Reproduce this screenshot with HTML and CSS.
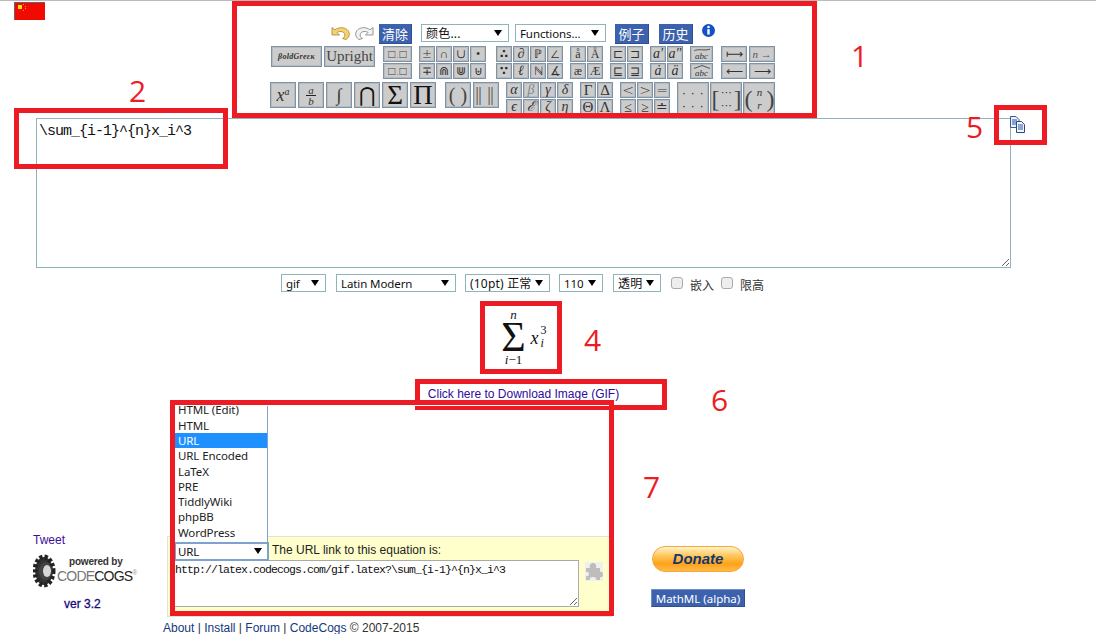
FILE: index.html
```html
<!DOCTYPE html>
<html lang="zh">
<head>
<meta charset="utf-8">
<title>LaTeX Equation Editor</title>
<link rel="stylesheet" href="styles.css">
</head>
<body>
<div class="page">
  <header class="top">
    <svg class="flag" width="31" height="18" viewBox="0 0 31 18"><rect width="31" height="18" fill="#f00a00"/><path d="M0 .5H31M.5 0V18" stroke="#666"/><rect x="4" y="3" width="4" height="4" fill="#ffe600"/><rect x="9" y="2" width="1" height="1" fill="#e8b000"/><rect x="11" y="4" width="1" height="1" fill="#e8b000"/><rect x="11" y="6" width="1" height="1" fill="#e8b000"/><rect x="9" y="8" width="1" height="1" fill="#e8b000"/></svg>
    <section class="toolbar">
      <div class="tool-actions">
        <svg class="history-icon" width="20" height="14" viewBox="0 0 20 14"><path d="M1 1.500V9H8.500L6 6.500C8 5 12 5 13.500 7.500C14.500 9.500 13.500 11.500 11.500 12.500L15 13.500C19 11 19.500 6.500 16 3.500C12.500 1 8 1 4 3.800Z" fill="#f6d270" stroke="#a8842e" stroke-width=".8"/></svg>
        <svg class="history-icon" width="20" height="14" viewBox="0 0 20 14"><path d="M19 1.500V9H11.500L14 6.500C12 5 8 5 6.500 7.500C5.500 9.500 6.500 11.500 8.500 12.500L5 13.500C1 11 .5 6.500 4 3.500C7.500 1 12 1 16 3.800Z" fill="#f2f2f2" stroke="#7f7f7f" stroke-width=".8"/></svg>
        <button class="blue-btn clear-btn">清除</button>
        <div class="sel sel-color"><select><option>颜色...</option></select></div>
        <div class="sel sel-func"><select><option>Functions...</option></select></div>
        <button class="blue-btn example-btn">例子</button>
        <button class="blue-btn history-btn">历史</button>
        <svg class="info" width="13" height="13" viewBox="0 0 13 13"><circle cx="6.500" cy="6.500" r="6.500" fill="#1450c8"/><circle cx="6.500" cy="3" r="1.300" fill="#fff"/><rect x="5.300" y="5.200" width="2.400" height="5.300" fill="#fff"/></svg>
      </div>
      <div class="tile-row tile-row-a">
        <div class="tile-group g-style">
          <span class="tile style-tile bold-greek">βoldGreεκ</span>
          <span class="tile style-tile upright">Upright</span>
        </div>
        <div class="tile-group g-box"><span class="tile w29 sym">□.□</span><span class="tile w29 sym">□.□</span></div>
        <div class="tile-group c4">
          <span class="tile">±</span><span class="tile">∩</span><span class="tile">∪</span><span class="tile">•</span>
          <span class="tile">∓</span><span class="tile">⋒</span><span class="tile">⋓</span><span class="tile">⊎</span>
        </div>
        <div class="tile-group c4 g-gap">
          <span class="tile strong">∴</span><span class="tile it">∂</span><span class="tile">ℙ</span><span class="tile">∠</span>
          <span class="tile strong">∵</span><span class="tile it">ℓ</span><span class="tile">ℕ</span><span class="tile">∡</span>
        </div>
        <div class="tile-group c2">
          <span class="tile srf">å</span><span class="tile srf">Å</span><span class="tile srf">æ</span><span class="tile srf">Æ</span>
        </div>
        <div class="tile-group c2">
          <span class="tile">⊏</span><span class="tile">⊐</span><span class="tile">⊑</span><span class="tile">⊒</span>
        </div>
        <div class="tile-group c2">
          <span class="tile it">a′</span><span class="tile it">a″</span><span class="tile it">ȧ</span><span class="tile it">ä</span>
        </div>
        <div class="tile-group c1">
          <span class="tile stacked"><svg width="18" height="4" viewBox="0 0 18 4"><path d="M1 3C5 0 12 3.500 17 1" fill="none" stroke="#333" stroke-width=".8"/></svg><b>abc</b></span>
          <span class="tile stacked"><svg width="18" height="4" viewBox="0 0 18 4"><path d="M1 3.500L9 .5L17 3.500" fill="none" stroke="#333" stroke-width=".8"/></svg><b>abc</b></span>
        </div>
        <div class="tile-group c2w g-gap-s">
          <span class="tile">⟼</span><span class="tile small-it">n →</span><span class="tile">⟵</span><span class="tile">⟶</span>
        </div>
      </div>
      <div class="tile-row tile-row-b">
        <div class="tile-group g-big">
          <span class="tile big it">x<sup>a</sup></span>
          <span class="tile big frac it"><u>a</u><u>b</u></span>
          <span class="tile big it">∫</span>
          <span class="tile big thin">⋂</span>
          <span class="tile big large">Σ</span>
          <span class="tile big large">Π</span>
        </div>
        <div class="tile-group g-big g-fence">
          <span class="tile big fence">( )</span>
          <span class="tile big bars">‖‖</span>
        </div>
        <div class="tile-group c4">
          <span class="tile it gk">α</span><span class="tile it gk soft">β</span><span class="tile it gk">γ</span><span class="tile it gk">δ</span>
          <span class="tile it gk">ϵ</span><span class="tile it gk">ℰ</span><span class="tile it gk">ζ</span><span class="tile it gk">η</span>
        </div>
        <div class="tile-group c2">
          <span class="tile gk srf">Γ</span><span class="tile gk srf">Δ</span><span class="tile gk srf">Θ</span><span class="tile gk srf">Λ</span>
        </div>
        <div class="tile-group c3">
          <span class="tile gk">&lt;</span><span class="tile gk">&gt;</span><span class="tile gk">=</span>
          <span class="tile gk">≤</span><span class="tile gk">≥</span><span class="tile gk">≐</span>
        </div>
        <div class="tile-group g-matrix">
          <span class="tile matrix dots"><b>· · ·</b><b>· · ·</b></span>
          <span class="tile matrix wrap"><em>[</em><span class="cells"><b>⋯</b><b>⋯</b></span><em>]</em></span>
          <span class="tile matrix wrap"><em>(</em><span class="cells it-cells"><b>n</b><b>r</b></span><em>)</em></span>
        </div>
      </div>
    </section>
  </header>

  <div class="editor-row">
    <textarea class="editor" spellcheck="false">\sum_{i-1}^{n}x_i^3</textarea>
    <svg class="copy" width="16" height="17" viewBox="0 0 16 17"><path d="M.500.500H6L9 3.500V11.500H.500Z" fill="#e8f0fb" stroke="#3a5a90"/><path d="M2 4H7M2 6H7M2 8H7" stroke="#2a55b0"/><path d="M6.500 5.500H11.500L14.500 8.500V16.500H6.500Z" fill="#eef4fc" stroke="#2e4a78"/><path d="M8 9H13M8 11H13M8 13H13" stroke="#2a55b0"/></svg>
  </div>

  <div class="options">
    <div class="sel sel-gif"><select><option>gif</option></select></div>
    <div class="sel sel-font"><select><option>Latin Modern</option></select></div>
    <div class="sel sel-size"><select><option>(10pt) 正常</option></select></div>
    <div class="sel sel-dpi"><select><option>110</option></select></div>
    <div class="sel sel-bg"><select><option>透明</option></select></div>
    <label class="check"><input type="checkbox"><span>嵌入</span></label>
    <label class="check"><input type="checkbox"><span>限高</span></label>
  </div>

  <div class="result">
    <div class="equation">
      <div class="sum">
        <span class="limit"><i>n</i></span>
        <span class="sigma">Σ</span>
        <span class="limit"><i>i</i>−1</span>
      </div>
      <span class="term">x</span>
      <div class="scripts"><span>3</span><span class="it-script">i</span></div>
    </div>
    <a class="download" href="#">Click here to Download Image (GIF)</a>
  </div>

  <div class="bottom">
    <aside class="brand">
      <a class="tweet" href="#">Tweet</a>
      <div class="logo">
        <svg class="gear" width="24" height="34" viewBox="0 0 24 34"><ellipse cx="11" cy="17" rx="9" ry="14" fill="#333" stroke="#222" stroke-width="5" stroke-dasharray="3 2"/><ellipse cx="12.500" cy="17" rx="6.500" ry="9" fill="#444"/><ellipse cx="14" cy="17" rx="4" ry="6" fill="#d8d8d8"/></svg>
        <div class="logo-text">
          <span class="powered">powered by</span>
          <span class="cogs"><em>CODE</em>COGS<sup>®</sup></span>
        </div>
      </div>
      <span class="version">ver 3.2</span>
    </aside>

    <section class="panel">
      <ul class="menu">
        <li>HTML (Edit)</li><li>HTML</li><li class="current">URL</li><li>URL Encoded</li><li>LaTeX</li><li>PRE</li><li>TiddlyWiki</li><li>phpBB</li><li>WordPress</li>
      </ul>
      <div class="panel-head">
        <div class="sel sel-format"><select><option>URL</option></select></div>
        <span class="panel-label">The URL link to this equation is:</span>
      </div>
      <div class="panel-body">
        <textarea class="url" spellcheck="false">http://latex.codecogs.com/gif.latex?\sum_{i-1}^{n}x_i^3</textarea>
        <div class="plugin"><svg width="18" height="19" viewBox="0 0 18 19"><path d="M1 6H5C4 3 6 1 8 1S12 3 11 6H15V10C17 9 18 11 18 12.500S17 16 15 15V18H11C12 16 10 15 8 15S4 16 5 18H1V14C3 15 4 13 4 12S3 9 1 10Z" fill="#bdbdbd"/></svg></div>
      </div>
    </section>

    <aside class="extras">
      <button class="donate">Donate</button>
      <button class="blue-btn mathml">MathML (alpha)</button>
    </aside>
  </div>

  <footer class="foot"><a href="#">About</a> | <a href="#">Install</a> | <a href="#">Forum</a> | <a href="#">CodeCogs</a> © 2007-2015</footer>

  <div class="marks">
    <div class="mark m1"></div><div class="mark m2"></div><div class="mark m5"></div><div class="mark m4"></div><div class="mark m6"></div><div class="mark m7"></div>
    <span class="num n1">1</span><span class="num n2">2</span><span class="num n5">5</span><span class="num n4">4</span><span class="num n6">6</span><span class="num n7">7</span>
  </div>
</div>
</body>
</html>
```
FILE: styles.css
```css
* { box-sizing: border-box; }
html, body { margin: 0; padding: 0; background: #fff; }
.page {
  position: relative;
  width: 1096px;
  height: 634px;
  overflow: hidden;
  border-top: 1px solid #bbb;
  font: 12px "Noto Sans", "Noto Sans CJK SC", sans-serif;
  color: #111;
}
a { text-decoration: none; }

/* top area */
.top { display: flex; height: 117px; padding-left: 14px; }
.flag { margin-top: 1px; flex: none; }
.toolbar { margin-left: 225px; padding-top: 23px; width: 510px; }
.tool-actions { display: flex; align-items: flex-start; height: 20px; padding-left: 61px; }
.history-icon { margin: 2px 3px 0 0; }
.blue-btn {
  padding: 0;
  border: 1px solid #2f4f92;
  border-width: 0 1px 1px 0;
  background: #3d62ad;
  color: #fff;
  font: 13px "Noto Sans CJK SC", "Noto Sans", sans-serif;
}
.clear-btn { width: 33px; height: 20px; margin-left: 2px; }
.example-btn { width: 34px; height: 20px; margin-left: 9px; }
.history-btn { width: 34px; height: 20px; margin-left: 10px; }
.info { margin-left: 9px; }

.sel { position: relative; height: 18px; border: 1px solid #8fb4ba; background: #fff; }
.sel select {
  display: block;
  width: 100%;
  height: 100%;
  padding: 0 0 0 4px;
  border: 0;
  outline: 0;
  background: transparent;
  appearance: none;
  font: 11.500px "Noto Sans", "Noto Sans CJK SC", sans-serif;
  letter-spacing: -.1px;
  color: #111;
}
.sel-color select, .sel-size select, .sel-bg select { font-size: 12px; letter-spacing: .2px; }
.sel::after {
  content: "";
  position: absolute;
  right: 6px;
  top: 5px;
  border: 4px solid transparent;
  border-top: 6px solid #000;
  border-bottom: 0;
}
.sel-color { width: 88px; margin-left: 9px; }
.sel-func { width: 91px; margin-left: 6px; }

.tile-row { display: flex; gap: 7px; align-items: flex-start; }
.tile-row-a { margin: 2px 0 0 1px; height: 33px; }
.tile-row-b { margin-top: 3px; gap: 7px; }
.tile-group { display: grid; gap: 1px; }
.c1 { grid-template-columns: 23px; }
.c2 { grid-template-columns: repeat(2, 16px); }
.c3 { grid-template-columns: repeat(3, 16px); }
.c4 { grid-template-columns: repeat(4, 16px); }
.c2w { grid-template-columns: repeat(2, 26px); gap: 1px 2px; }
.g-style { grid-template-columns: 51px 51px; gap: 2px; }
.g-box { grid-template-columns: 29px; margin-left: 1px; }
.g-gap { margin-left: 3px; }
.g-gap-s { margin-left: 1px; }
.g-big { grid-template-columns: repeat(6, 26px); gap: 2px; }
.g-fence { grid-template-columns: 26px 26px; margin-left: 2px; }
.g-matrix { grid-template-columns: 32px 32px 32px; gap: 1px; }

.tile {
  display: flex;
  align-items: center;
  justify-content: center;
  height: 16px;
  overflow: hidden;
  white-space: nowrap;
  border: 1px solid #7f93a4;
  box-shadow: inset 0 0 0 1px #b4bcc2;
  background: #ccc;
  color: #333;
  font: 200 12px/1 "DejaVu Sans", "Liberation Serif", serif;
}
.strong { font-weight: 700; color: #222; }
.it { font: italic 14px/1 "Liberation Serif", "DejaVu Serif", serif; }
.srf { font: 12px/1 "Liberation Serif", serif; }
.sym { font: 200 12px/1 "DejaVu Sans", sans-serif; color: #444; }
.w29 { width: 29px; }
.style-tile { height: 21px; }
.bold-greek { font: italic bold 8px "Liberation Serif", serif; letter-spacing: .3px; }
.upright { font: 15px "Liberation Serif", serif; color: #444; }
.stacked { flex-direction: column; }
.stacked svg { display: block; }
.stacked b { font: italic 400 9px/9px "Liberation Serif", serif; }
.small-it { font: italic 11px "Liberation Serif", serif; color: #555; }
.c2w .tile { font: 200 12px/1 "DejaVu Sans", sans-serif; letter-spacing: 0; }
.c2w .small-it { font: italic 11px/1 "Liberation Serif", serif; }
.big { height: 26px; font-size: 18px; }
.big sup { font-size: 10px; margin-top: -7px; }
.frac { flex-direction: column; font-size: 11px; line-height: 10px; }
.frac u { text-decoration: none; padding: 0 2px; }
.frac u:first-child { border-bottom: 1px solid #222; }
.thin { font: 200 20px/1 "DejaVu Sans", sans-serif; color: #111; }
.large { font: 27px/22px "Liberation Serif", serif; color: #111; }
.fence { font: 20px/22px "Liberation Serif", serif; color: #444; }
.bars { font: 200 18px/20px "DejaVu Sans", sans-serif; letter-spacing: 3px; color: #444; }
.gk { font-size: 14px; }
.gk.srf { font-size: 15px; }
.soft { color: #888; }
.matrix { height: 33px; font: 12px/1 "DejaVu Sans", sans-serif; }
.matrix b { font-weight: 400; }
.dots { flex-direction: column; justify-content: space-between; padding: 3px 0 4px; font: 700 13px/1 "Liberation Sans", sans-serif; letter-spacing: .5px; }
.wrap em { display: block; width: 7px; font: normal 24px/26px "Liberation Serif", serif; color: #444; }
.wrap em:first-child { margin-right: 1px; }
.cells { display: flex; flex-direction: column; align-items: center; width: 14px; gap: 2px; font: 11px/11px "DejaVu Sans", sans-serif; }
.it-cells { font: italic 11px/11px "Liberation Serif", serif; }

/* editor */
.editor-row { display: flex; padding-left: 36px; align-items: flex-start; }
.editor {
  flex: none;
  width: 975px;
  height: 150px;
  padding: 3px 2px;
  border: 1px solid #8fb4ba;
  outline: 0;
  font: 15px/20px "Liberation Mono", monospace;
  letter-spacing: -1px;
  color: #111;
}
.copy { margin: -2px 0 0 -1px; flex: none; }

/* options */
.options { display: flex; gap: 10px; padding: 6px 0 0 281px; height: 24px; align-items: flex-start; }
.sel-gif { width: 45px; }
.sel-font { width: 120px; }
.sel-size { width: 85px; margin-left: -1px; }
.sel-dpi { width: 44px; margin-left: -1px; }
.sel-bg { width: 48px; }
.check { display: flex; align-items: flex-start; gap: 7px; color: #333; margin-right: -3px; }
.check input {
  width: 12px;
  height: 12px;
  margin: 3px 0 0;
  appearance: none;
  border: 1px solid #aaa;
  border-radius: 3px;
  background: #eee;
}
.check span { margin-top: 5px; line-height: 14px; }

/* result */
.result { display: flex; flex-direction: column; align-items: center; width: 1045px; }
.equation {
  display: flex;
  align-items: center;
  height: 95px;
  padding-bottom: 4px;
  font-family: "Liberation Serif", serif;
  color: #111;
}
.sum { display: flex; flex-direction: column; align-items: center; width: 30px; }
.limit { font: 13px/12px "Liberation Serif", serif; }
.sigma { font: 42px/33px "Liberation Serif", serif; }
.term { font: italic 18px/20px "Liberation Serif", serif; margin-left: 2px; }
.scripts { display: flex; flex-direction: column; font: 12px/13px "Liberation Serif", serif; margin: -1px 0 0 2px; }
.it-script { font-style: italic; }
.download { font: 12px/14px "Liberation Sans", sans-serif; color: #2f0aa0; margin-left: 2px; }

/* bottom */
.bottom { display: flex; height: 84px; margin-top: 132px; }
.brand { width: 167px; padding-left: 33px; display: flex; flex-direction: column; }
.tweet { font: 12px/14px "Liberation Sans", sans-serif; color: #3d0e9c; }
.logo { display: flex; margin-top: 6px; height: 35px; }
.gear { flex: none; margin-top: 1px; }
.logo-text { display: flex; flex-direction: column; align-items: flex-start; }
.powered { font: 700 10px/13px "Liberation Sans", sans-serif; color: #333; margin: 2px 0 0 12px; letter-spacing: -.2px; }
.cogs { font: 14px/16px "Liberation Sans", sans-serif; color: #222; letter-spacing: -.8px; }
.cogs em { font-style: normal; color: #777; }
.cogs sup { font-size: 7px; line-height: 0; color: #999; }
.version { font: 12px/14px "Liberation Sans", sans-serif; color: #1a0a80; margin: 9px 0 0 31px; -webkit-text-stroke: .3px #1a0a80; }

.panel {
  position: relative;
  width: 445px;
  height: 81px;
  margin-top: 3px;
  padding: 5px 0 0 6px;
  border: 1px solid #e2e2da;
  background: #ffc;
}
.panel-head { display: flex; align-items: center; height: 18px; }
.sel-format { width: 95px; border: 2px solid #7da2ce; height: 19px; }
.sel-format select { padding: 0 0 2px 2px; }
.sel-format::after { top: 4px; right: 5px; }
.panel-label { margin-left: 3px; margin-top: -2px; font: 12px "Liberation Sans", sans-serif; color: #222; }
.panel-body { display: flex; align-items: flex-start; }
.url {
  flex: none;
  width: 405px;
  height: 47px;
  padding: 2px 0 0;
  border: 1px solid #aaa;
  outline: 0;
  font: 11.500px/14px "Liberation Mono", monospace;
  letter-spacing: -.9px;
  color: #111;
}
.plugin { margin: 2px 0 0 6px; background: #f0f0ee; width: 18px; height: 19px; }
.plugin svg { display: block; }
.menu {
  position: absolute;
  left: 6px;
  bottom: 74px;
  width: 94px;
  margin: 0;
  padding: 0 0 2px;
  list-style: none;
  border: 1px solid #7da2ce;
  border-bottom: 0;
  background: #fff;
}
.menu li { height: 15.300px; padding-left: 3px; font: 11.500px/15px "Noto Sans", sans-serif; letter-spacing: -.1px; color: #222; white-space: nowrap; }
.menu .current { background: #1e90ff; color: #fff; }

.extras { display: flex; flex-direction: column; align-items: center; width: 94px; margin: 13px 0 0 39px; }
.donate {
  width: 92px;
  height: 26px;
  padding: 0 0 2px;
  border: 1px solid #f5a63c;
  border-radius: 13px;
  background: linear-gradient(#fff3c8, #ffc861 35%, #ffa21a 70%, #ffbb47);
  color: #12386e;
  font: italic 700 15px "Liberation Sans", sans-serif;
}
.mathml { width: 94px; height: 18px; margin-top: 17px; font: 11.500px "Noto Sans", sans-serif; border-width: 1px; border-color: #6f8fc8 #2f4f92 #2f4f92 #6f8fc8; }

.foot { padding: 4px 0 0 163px; font: 12px/14px "Liberation Sans", sans-serif; color: #333; }
.foot a { color: #14387f; }

/* red annotations drawn over the page */
.marks { position: absolute; left: 0; top: -1px; width: 1096px; height: 634px; pointer-events: none; }
.mark { position: absolute; border: 5px solid #ed1c24; }
.m1 { left: 232px; top: 1px; width: 585px; height: 117px; }
.m2 { left: 14px; top: 108px; width: 214px; height: 61px; }
.m5 { left: 994px; top: 105px; width: 53px; height: 40px; }
.m4 { left: 480px; top: 301px; width: 82px; height: 73px; }
.m6 { left: 415px; top: 379px; width: 252px; height: 31px; }
.m7 { left: 170px; top: 400px; width: 444px; height: 216px; box-shadow: inset 0 1px 0 #fff; }
.num { position: absolute; font: 30px/30px "Open Sans", sans-serif; color: #ed1c24; }
.n1 { left: 851px; top: 41px; }
.n2 { left: 129px; top: 76px; }
.n5 { left: 966px; top: 112px; }
.n4 { left: 584px; top: 325px; }
.n6 { left: 711px; top: 385px; }
.n7 { left: 643px; top: 472px; }
```
